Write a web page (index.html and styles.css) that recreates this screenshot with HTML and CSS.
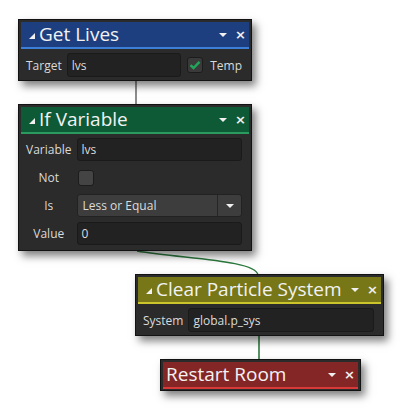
FILE: index.html
```html
<!DOCTYPE html>
<html>
<head>
<meta charset="utf-8">
<link rel="stylesheet" href="styles.css">
</head>
<body>
<div class="canvas">
  <svg class="wires" width="405" height="411" viewBox="0 0 405 411">
    <line x1="136" y1="80" x2="136" y2="105" stroke="#707070" stroke-width="1.6"/>
    <path d="M137 251 C 185 259, 256 260, 258 275" fill="none" stroke="#2c7a3e" stroke-width="1.4"/>
    <line x1="259" y1="335" x2="259" y2="360" stroke="#2c7a3e" stroke-width="1.6"/>
  </svg>

  <div class="node n-get">
    <div class="head blue">
      <span class="tri"></span><span class="title">Get Lives</span>
      <span class="tools"><span class="drop"></span><span class="close">×</span></span>
    </div>
    <div class="body row-body">
      <span class="lbl">Target</span>
      <div class="field grow">lvs</div>
      <span class="check on"><svg width="12" height="10" viewBox="0 0 12 10"><path d="M1.5 5.2 L4.5 8 L10.5 1.8" fill="none" stroke="#22a55a" stroke-width="2.4"/></svg></span>
      <span class="lbl temp">Temp</span>
    </div>
  </div>

  <div class="node n-if">
    <div class="head green">
      <span class="tri"></span><span class="title">If Variable</span>
      <span class="tools"><span class="drop"></span><span class="close">×</span></span>
    </div>
    <div class="body grid-body">
      <span class="lbl">Variable</span>
      <div class="field">lvs</div>
      <span class="lbl">Not</span>
      <div class="cell"><span class="check off"></span></div>
      <span class="lbl">Is</span>
      <div class="select"><span class="sel-text">Less or Equal</span><span class="sel-btn"><span class="drop small"></span></span></div>
      <span class="lbl">Value</span>
      <div class="field">0</div>
    </div>
  </div>

  <div class="node n-clear">
    <div class="head olive">
      <span class="tri"></span><span class="title">Clear Particle System</span>
      <span class="tools"><span class="drop"></span><span class="close">×</span></span>
    </div>
    <div class="body row-body">
      <span class="lbl">System</span>
      <div class="field grow">global.p_sys</div>
    </div>
  </div>

  <div class="node n-restart">
    <div class="head red plain">
      <span class="title">Restart Room</span>
      <span class="tools"><span class="drop"></span><span class="close">×</span></span>
    </div>
  </div>
</div>
</body>
</html>
```

FILE: styles.css
```css
html, body {
  margin: 0;
  padding: 0;
  background: #ffffff;
}
.canvas {
  position: relative;
  width: 405px;
  height: 411px;
  overflow: hidden;
  font-family: "Open Sans", "Noto Sans", sans-serif;
}
.wires {
  position: absolute;
  left: 0;
  top: 0;
}
.node {
  position: absolute;
  box-sizing: border-box;
  background: #2b2b2b;
  border: 1px solid #121212;
  box-shadow: 4px 5px 8px rgba(0, 0, 0, 0.5);
  display: flex;
  flex-direction: column;
}
.n-get { left: 18px; top: 19px; width: 234px; height: 62px; }
.n-if { left: 18px; top: 104px; width: 234px; height: 147px; }
.n-clear { left: 135px; top: 274px; width: 249px; height: 62px; }
.n-restart { left: 160px; top: 359px; width: 201px; height: 32px; }

.head {
  margin: 2px 2px 0 2px;
  height: 25px;
  display: flex;
  align-items: center;
  padding: 0 6px 0 8px;
  color: #f2f2f2;
  font-size: 19px;
  line-height: 25px;
  box-sizing: content-box;
}
.head.plain { padding-left: 3px; }
.blue { background: #1d3f7f; border-bottom: 2px solid #3b7fd8; }
.green { background: #0e5a37; border-bottom: 2px solid #2b9a5f; }
.olive { background: #777718; border-bottom: 2px solid #cbc42a; }
.red { background: #852626; border-bottom: 2px solid #d83a3a; }

.tri {
  width: 0;
  height: 0;
  border-left: 6px solid transparent;
  border-bottom: 6px solid #f0f0f0;
  margin-right: 4px;
  margin-top: 3px;
}
.title { flex: 1; white-space: nowrap; }
.tools {
  display: flex;
  align-items: center;
  gap: 8px;
}
.drop {
  width: 0;
  height: 0;
  border-left: 4px solid transparent;
  border-right: 4px solid transparent;
  border-top: 4px solid #f0f0f0;
}
.close {
  font-family: "DejaVu Sans", sans-serif;
  font-weight: bold;
  font-size: 13px;
  line-height: 13px;
  color: #f0f0f0;
  width: 8px;
  text-align: center;
}

.body {
  flex: 1;
  color: #dadada;
  font-size: 12px;
}
.row-body {
  display: flex;
  align-items: center;
  padding: 3px 9px 2px 7px;
}
.row-body .lbl { margin-right: 5px; }
.row-body .grow { flex: 1; height: 24px; }
.row-body .check { margin-left: 6px; margin-right: 7px; }
.row-body .temp { margin-right: 0; }

.grid-body {
  display: grid;
  grid-template-columns: auto 1fr;
  grid-auto-rows: 23px;
  row-gap: 5px;
  column-gap: 5px;
  padding: 4px 9px 5px 7px;
  align-items: center;
}
.grid-body .lbl { text-align: center; }

.lbl { white-space: nowrap; }
.field {
  box-sizing: border-box;
  height: 23px;
  background: #222222;
  border: 1px solid #1a1a1a;
  border-radius: 3px;
  padding-left: 4px;
  display: flex;
  align-items: center;
  color: #dcdcdc;
}
.cell { display: flex; align-items: center; }
.check {
  box-sizing: border-box;
  width: 16px;
  height: 16px;
  border-radius: 3px;
  border: 1px solid #1c1c1c;
  display: flex;
  align-items: center;
  justify-content: center;
}
.check.on { background: #3a3a3a; }
.check.off { background: #444444; margin-left: 1px; }
.select {
  box-sizing: border-box;
  height: 23px;
  background: #3d3d3d;
  border: 1px solid #222222;
  border-radius: 3px;
  display: flex;
  align-items: center;
}
.sel-text { flex: 1; padding-left: 5px; color: #dcdcdc; }
.sel-btn {
  width: 23px;
  height: 100%;
  border-left: 1px solid #262626;
  display: flex;
  align-items: center;
  justify-content: center;
}
.drop.small { border-top-width: 4px; }
```
